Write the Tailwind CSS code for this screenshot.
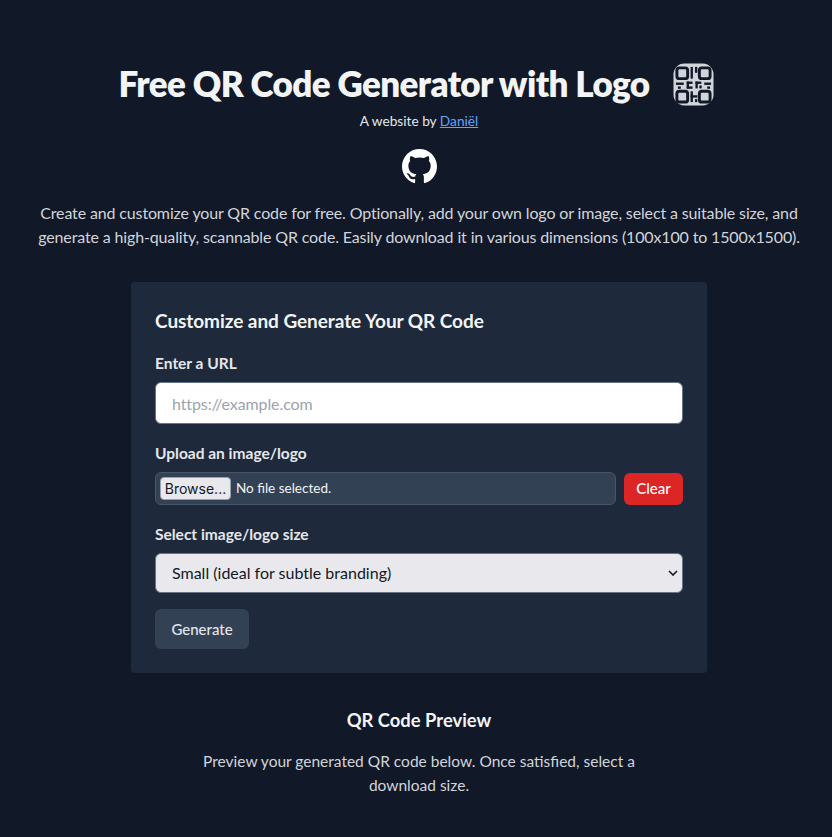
<!DOCTYPE html>
<html lang="en">
  <head>
    <meta charset="UTF-8" />
    <meta name="viewport" content="width=device-width, initial-scale=1.0" />
    <script src="https://cdn.jsdelivr.net/npm/@tailwindcss/browser@4"></script>
    <title>Free QR Code Generator with Logo</title>
  </head>
  <body class="bg-[#111827] text-gray-200 font-['Lato',sans-serif] h-[837px] overflow-hidden">
    <main class="pl-[6px] pt-[59px] text-center">
      <div class="flex items-center justify-center gap-[23px] h-[48px] -ml-[6px]">
        <h1 class="text-[35px] font-extrabold tracking-[-0.6px] text-[#f3f4f6] leading-[48px]">Free QR Code Generator with Logo</h1>
        <svg width="41" height="43" viewBox="0 0 42 44" class="shrink-0 translate-y-[1px]">
          <rect x="0.5" y="0.5" width="41" height="43" rx="11" fill="#d1d5db" />
          <g fill="none" stroke="#111827" stroke-width="3">
            <rect x="4" y="5" width="11" height="11" rx="2.5" />
            <rect x="27" y="5" width="11" height="11" rx="2.5" />
            <rect x="4" y="29" width="11" height="11" rx="2.5" />
            <rect x="27" y="29" width="11" height="11" rx="2.5" />
          </g>
          <g fill="#111827">
            <rect x="18" y="4" width="2.4" height="12" />
            <rect x="22.5" y="4" width="2.4" height="6" />
            <rect x="3" y="20" width="8" height="2.4" />
            <rect x="5" y="24" width="3" height="2.4" />
            <rect x="14" y="19" width="6" height="2.4" />
            <rect x="14" y="19" width="2.4" height="7" />
            <rect x="14" y="24" width="6" height="2.4" />
            <rect x="23" y="19" width="6" height="2.4" />
            <rect x="23" y="19" width="2.4" height="7" />
            <rect x="27" y="23" width="2.4" height="3" />
            <rect x="32" y="20" width="7" height="2.4" />
            <rect x="35" y="24" width="3" height="2.4" />
            <rect x="18" y="29" width="2.4" height="11" />
            <rect x="18" y="33" width="7" height="2.4" />
            <rect x="22.5" y="37" width="2.4" height="3" />
          </g>
        </svg>
      </div>
      <p class="text-[13.7px] leading-5 mt-[4px] text-gray-200">
        A website by <a href="#" class="text-[#60a5fa] underline">Daniël</a>
      </p>
      <a href="#" class="block w-fit mx-auto mt-[18px]">
        <svg width="35" height="35" viewBox="0 0 16 16" fill="#ffffff">
          <path d="M8 0C3.58 0 0 3.58 0 8c0 3.54 2.29 6.53 5.47 7.59.4.07.55-.17.55-.38 0-.19-.01-.82-.01-1.49-2.01.37-2.53-.49-2.69-.94-.09-.23-.48-.94-.82-1.13-.28-.15-.68-.52-.01-.53.63-.01 1.08.58 1.23.82.72 1.21 1.87.87 2.33.66.07-.52.28-.87.51-1.07-1.78-.2-3.64-.89-3.64-3.95 0-.87.31-1.59.82-2.15-.08-.2-.36-1.02.08-2.12 0 0 .67-.21 2.2.82.64-.18 1.32-.27 2-.27.68 0 1.36.09 2 .27 1.53-1.04 2.2-.82 2.2-.82.44 1.1.16 1.92.08 2.12.51.56.82 1.27.82 2.15 0 3.07-1.87 3.75-3.65 3.95.29.25.54.73.54 1.48 0 1.07-.01 1.93-.01 2.2 0 .21.15.46.55.38A8.013 8.013 0 0016 8c0-4.42-3.58-8-8-8z" />
        </svg>
      </a>
      <p class="w-[768px] mx-auto text-[16px] tracking-[-0.14px] leading-6 mt-[17px] text-[#d1d5db]">
        Create and customize your QR code for free. Optionally, add your own logo or image, select a suitable size, and generate a high-quality, scannable QR code. Easily download it in various dimensions (100x100 to 1500x1500).
      </p>

      <section class="w-[576px] mx-auto mt-[33px] bg-[#1e293b] rounded p-6 text-left">
        <h2 class="text-[19px] tracking-[-0.06px] font-bold text-[#f3f4f6] leading-7 translate-y-[1px]">Customize and Generate Your QR Code</h2>

        <label for="url" class="block mt-[17px] text-[15.5px] font-bold text-[#e5e7eb] leading-6">Enter a URL</label>
        <input
          id="url"
          type="text"
          placeholder="https://example.com"
          class="block w-full h-[42px] mt-[7px] px-4 bg-white rounded-md border border-[#64748b] text-[16px] tracking-[-0.1px] placeholder:text-[#9ca3af]"
        />

        <label class="block mt-[17px] text-[15.5px] font-bold text-[#e5e7eb] leading-6">Upload an image/logo</label>
        <div class="flex items-center gap-2 mt-[7px]">
          <div class="flex-1 h-[33px] flex items-center gap-[5px] px-[4px] bg-[#334155] rounded-md border border-[#475569]">
            <button class="h-[23px] w-[71px] bg-[#e9e9ed] border border-gray-400 rounded text-[#111827] text-[14px] font-['Inter',sans-serif]">Browse...</button>
            <span class="text-[13.5px] text-[#f3f4f6]">No file selected.</span>
          </div>
          <button class="h-[32px] w-[59px] bg-[#dc2626] rounded-md text-white text-[15px] font-medium">Clear</button>
        </div>

        <label for="size" class="block mt-[17px] text-[15.5px] font-bold text-[#e5e7eb] leading-6">Select image/logo size</label>
        <div class="relative mt-[7px]">
          <select id="size" class="block w-full h-[40px] pl-4 appearance-none bg-[#e9e9ed] rounded-md border border-[#64748b] text-[#111827] text-[16px]">
            <option>Small (ideal for subtle branding)</option>
          </select>
          <svg width="10" height="6" viewBox="0 0 10 6" class="absolute right-[5px] top-[17px]" fill="none" stroke="#111827" stroke-width="1.6">
            <path d="M1 1l4 4 4-4" />
          </svg>
        </div>

        <button class="block mt-4 h-[40px] w-[94px] bg-[#334155] rounded-md text-[#e5e7eb] text-[15px] font-medium">Generate</button>
      </section>

      <h2 class="text-[18.4px] font-bold text-[#f3f4f6] mt-[33px] leading-7">QR Code Preview</h2>
      <p class="w-[480px] mx-auto mt-[15px] text-[15.5px] leading-6 text-[#d1d5db]">
        Preview your generated QR code below. Once satisfied, select a download size.
      </p>
    </main>
  </body>
</html>
